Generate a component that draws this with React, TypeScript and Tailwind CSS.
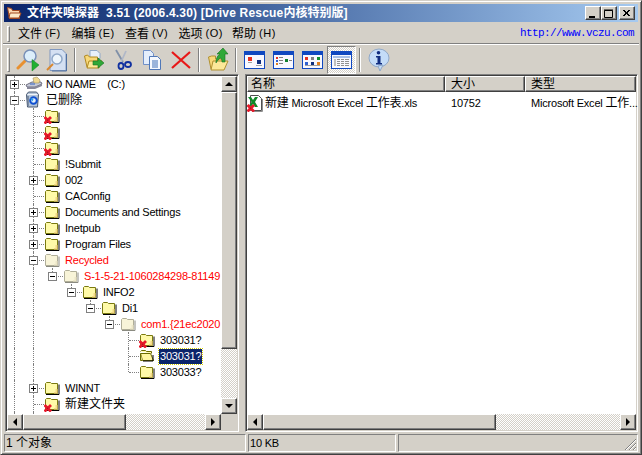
import React from 'react';

const UI_FONT = 'font-["Liberation_Sans","Noto_Sans_CJK_SC",sans-serif]';

// classic win2k bevels
const raised = 'border border-t-white border-l-white border-r-[#404040] border-b-[#404040] shadow-[inset_-1px_-1px_0_#808080]';
const sunkenThin = 'border border-t-[#808080] border-l-[#808080] border-r-white border-b-white';
const sunkenPane = 'border border-t-[#808080] border-l-[#808080] border-r-white border-b-white shadow-[inset_1px_1px_0_#404040,inset_-1px_-1px_0_#d4d0c8] p-[1px]';
const checker = 'bg-[repeating-conic-gradient(#d4d0c8_0_25%,#ffffff_0_50%)] bg-[length:2px_2px]';
// list and tree text: Arial-metric at 11px, pulled in to Tahoma's width
const smallText = 'text-[11px] tracking-[-0.2px]';

function RedCross() {
  return (
    <g>
      <path d="M0.500 9L7 15.500M7 9L0.500 15.500" stroke="#e8182a" strokeWidth="2.800" />
      <path d="M3.500 12.200h0.600" stroke="#401010" strokeWidth="1" />
    </g>
  );
}

function FolderIcon({ variant = 'normal' }: { variant?: 'normal' | 'deleted' | 'ghost' | 'open' }) {
  const ghost = variant === 'ghost';
  const stroke = ghost ? '#b0ae98' : '#7a7a10';
  const fill = ghost ? '#f8f4d8' : '#fffaa8';
  return (
    <svg width="16" height="16" viewBox="0 0 16 16" className="shrink-0 block">
      {variant === 'open' ? (
        <>
          <path d="M1.500 3.500l1-1h4l1 1h5v2" fill="#fff9a8" stroke="#6b6b00" />
          <path d="M1.500 5.500h10l3 7h-11z" fill="#fff5a0" stroke="#6b6b00" />
          <path d="M14 7v6H4" fill="none" stroke="#000" />
          <path d="M1.500 5.500v7h2" fill="#d8d088" stroke="#6b6b00" />
        </>
      ) : (
        <>
          <path d="M1.500 13.500v-10l1-1h4l1 1h6v10z" fill={fill} stroke={stroke} />
          <path d="M10 12h3.500v1.500H10zM11.500 9h2v3h-2z" fill={ghost ? '#ece6c8' : '#f4d888'} />
          <path d="M2 14.500h13V4.500" fill="none" stroke={ghost ? '#8a8a80' : '#000'} />
        </>
      )}
      {variant === 'deleted' && <RedCross />}
    </svg>
  );
}

function DriveIcon() {
  return (
    <svg width="18" height="16" viewBox="0 0 18 16" className="shrink-0 block">
      <path d="M1 9l6-3h9l1 2-7 3H2z" fill="#c4c8d8" stroke="#707080" />
      <path d="M2 11h8l7-3v2l-7 3H2z" fill="#88889a" />
      <path d="M8 2l4-1 3 3-1 3H9z" fill="#f0d890" stroke="#a09060" strokeWidth="0.600" />
      <path d="M5 8h5" stroke="#3060c0" />
    </svg>
  );
}

function BinIcon() {
  return (
    <svg width="16" height="17" viewBox="0 0 16 17" className="shrink-0 block -mt-px">
      <path d="M1.500 3.500l2-2.500h8l2 2.500-1 12.500h-10z" fill="#b4c4d8" stroke="#485870" />
      <path d="M2.500 3.500h10" stroke="#f0f4f8" />
      <path d="M3 5v10" stroke="#687890" strokeWidth="1.500" />
      <circle cx="8.500" cy="9.500" r="3.300" fill="#e4f0fc" stroke="#1050d0" strokeWidth="2" />
      <path d="M5 7l3.500 1-1 2.500" fill="#20a0f0" />
    </svg>
  );
}

function ExcelIcon() {
  return (
    <svg width="16" height="17" viewBox="0 0 16 17" className="shrink-0 block">
      <path d="M3.500 0.500h8l3 3v12h-11z" fill="#fff" stroke="#505050" />
      <path d="M15.500 4v12.500H5" fill="none" stroke="#909090" />
      <path d="M1 2h3l2 3 2-3h3L8 7l3 5H8L6 9l-2 3H1l3.500-5z" fill="#108828" />
      <g transform="translate(0 1)">
        <RedCross />
      </g>
    </svg>
  );
}

type RowProps = {
  depth: number;
  guides?: number[]; // columns with a through line
  toggle?: '+' | '-';
  lastChild?: boolean;
  icon: React.ReactNode;
  label?: string;
  cjk?: boolean;
  red?: boolean;
  selected?: boolean;
};

const vLine = 'absolute left-[9px] w-0 border-l border-dotted border-[#808080]';

function TreeRow({ depth, guides = [], toggle, lastChild, icon, label, cjk, red, selected }: RowProps) {
  const cols = Array.from({ length: depth }, (_, i) => i);
  return (
    <div className="flex h-4 items-center whitespace-nowrap">
      {cols.map((c) => (
        <div key={c} className="relative h-4 w-[19px] shrink-0">
          {guides.includes(c) && <div className={`${vLine} top-0 bottom-0`} />}
        </div>
      ))}
      <div className="relative h-4 w-[19px] shrink-0">
        <div className={`${vLine} top-0 ${lastChild ? 'h-2' : 'bottom-0'}`} />
        <div className="absolute left-[10px] top-2 h-0 w-[10px] border-t border-dotted border-[#808080]" />
        {toggle && (
          <div className="absolute left-[5px] top-[4px] flex h-[9px] w-[9px] items-center justify-center border border-[#808080] bg-white">
            <div className="relative h-[5px] w-[5px]">
              <div className="absolute left-0 top-[2px] h-px w-[5px] bg-black" />
              {toggle === '+' && <div className="absolute left-[2px] top-0 h-[5px] w-px bg-black" />}
            </div>
          </div>
        )}
      </div>
      <div className="ml-[1px] mr-[1px] w-[16px] shrink-0">{icon}</div>
      {label && (
        <span
          className={`ml-[3px] h-[15px] whitespace-pre px-[1px] leading-[15px] ${cjk ? 'text-[12px]' : smallText} ${
            selected
              ? 'bg-[#0a246a] text-white outline-1 outline-dotted outline-[#d4d000]'
              : red
                ? 'text-[#ff0000]'
                : 'text-black'
          }`}
        >
          {label}
        </span>
      )}
    </div>
  );
}

function ScrollArrow({ dir }: { dir: 'up' | 'down' | 'left' | 'right' }) {
  const pts = {
    up: '4,1 0,5 8,5',
    down: '0,1 8,1 4,5',
    left: '5,0 5,8 1,4',
    right: '1,0 1,8 5,4',
  }[dir];
  return (
    <div className={`flex h-4 w-4 shrink-0 items-center justify-center bg-[#d4d0c8] ${raised}`}>
      <svg width={dir === 'up' || dir === 'down' ? 8 : 6} height={dir === 'up' || dir === 'down' ? 6 : 8} className="block">
        <polygon points={pts} fill="#000" />
      </svg>
    </div>
  );
}

function VScrollbar() {
  return (
    <div className="flex w-4 shrink-0 flex-col">
      <ScrollArrow dir="up" />
      <div className={`h-[257px] shrink-0 bg-[#d4d0c8] ${raised}`} />
      <div className={`flex-1 ${checker}`} />
      <ScrollArrow dir="down" />
    </div>
  );
}

function HScrollbar({ thumb, className }: { thumb: string; className?: string }) {
  return (
    <div className={`flex h-4 shrink-0 ${className ?? ''}`}>
      <ScrollArrow dir="left" />
      <div className={`${thumb} shrink-0 bg-[#d4d0c8] ${raised}`} />
      <div className={`flex-1 ${checker}`} />
      <ScrollArrow dir="right" />
    </div>
  );
}

function Sep() {
  return <div className="mx-[3px] h-[24px] w-[2px] shrink-0 border-l border-r border-l-[#808080] border-r-white" />;
}

function Gripper({ tall }: { tall?: boolean }) {
  return (
    <div
      className={`${tall ? 'h-[24px]' : 'h-[16px]'} w-[3px] shrink-0 border border-t-white border-l-white border-r-[#808080] border-b-[#808080]`}
    />
  );
}

function ToolSlot({ active, children }: { active?: boolean; children: React.ReactNode }) {
  return (
    <div
      className={`flex h-[28px] w-[29px] shrink-0 items-center justify-center ${
        active ? `border border-t-[#808080] border-l-[#808080] border-r-white border-b-white ${checker}` : ''
      }`}
    >
      {children}
    </div>
  );
}

function MagnifierIcon() {
  return (
    <svg width="24" height="24" viewBox="0 0 24 24">
      <path d="M2 20l7-7" stroke="#e89030" strokeWidth="3" strokeLinecap="round" />
      <circle cx="14" cy="8" r="6" fill="#dceefa" stroke="#7890b8" strokeWidth="1.500" />
      <path d="M16 11.500l7 5.500-7 6z" fill="#20b030" stroke="#108020" strokeWidth="0.500" />
    </svg>
  );
}

function DocSearchIcon() {
  return (
    <svg width="22" height="24" viewBox="0 0 22 24">
      <path d="M4 1.500h12l4 4v17H4z" fill="#d4e0f2" stroke="#8098c0" />
      <path d="M20.500 6v17H6" fill="none" stroke="#5070a0" />
      <path d="M1 22l6-6" stroke="#d88830" strokeWidth="2" />
      <circle cx="11" cy="11" r="5" fill="#eef6fc" stroke="#90a8c8" strokeWidth="1.500" />
    </svg>
  );
}

function OpenFolderArrowIcon() {
  return (
    <svg width="22" height="22" viewBox="0 0 22 22">
      <path d="M7 1.500h7l3 3v5H7z" fill="#e8f0fc" stroke="#90a8c8" />
      <path d="M1.500 7l3-1 2 2h8v10H4z" fill="#f8d878" stroke="#b08820" />
      <path d="M4 19l2-7h13l-3 7z" fill="#fce898" stroke="#b08820" />
      <path d="M10 12h5V9l6 5-6 5v-3h-5z" fill="#30a838" stroke="#187020" strokeWidth="0.600" />
    </svg>
  );
}

function ScissorsIcon() {
  return (
    <svg width="20" height="22" viewBox="0 0 20 22">
      <path d="M3 1l7 12" stroke="#8090a8" strokeWidth="1.800" />
      <path d="M13 2L8 13" stroke="#b0b8c8" strokeWidth="1.800" />
      <ellipse cx="8" cy="17" rx="2.500" ry="3" fill="none" stroke="#1030a0" strokeWidth="1.800" />
      <ellipse cx="15" cy="15.500" rx="3" ry="2.500" fill="none" stroke="#1030a0" strokeWidth="1.800" />
    </svg>
  );
}

function CopyIcon() {
  return (
    <svg width="22" height="22" viewBox="0 0 22 22">
      <path d="M2.500 1.500h7l3 3v11h-10z" fill="#e4eefc" stroke="#7090c8" />
      <path d="M8.500 7.500h8l3 3v10h-11z" fill="#f4f8fe" stroke="#5078b8" />
      <path d="M11 12h6M11 14h6M11 16h6M11 18h6" stroke="#4070b8" />
    </svg>
  );
}

function DeleteIcon() {
  return (
    <svg width="22" height="22" viewBox="0 0 22 22">
      <path d="M2 3l18 16M20 3L2 19" stroke="#e81818" strokeWidth="2.200" />
    </svg>
  );
}

function UpFolderIcon() {
  return (
    <svg width="22" height="24" viewBox="0 0 22 24">
      <path d="M1.500 9l3-1h4v3h7v10H4z" fill="#f8d878" stroke="#b09030" />
      <path d="M4 22l2-9h15l-4 9z" fill="#fce898" stroke="#b09030" />
      <path d="M9 15c0-5 2-8 4-9H10l6-6 5 6h-3v8h-3c0-3-1-4-2-4-1 1-3 3-4 5z" fill="#30a838" stroke="#187020" strokeWidth="0.600" />
    </svg>
  );
}

function ViewIcon({ kind }: { kind: 'large' | 'small' | 'list' | 'detail' }) {
  return (
    <svg width="21" height="18" viewBox="0 0 21 18">
      <rect x="0.500" y="0.500" width="20" height="17" fill="#f8f8ff" stroke="#1048c0" />
      <rect x="1" y="1" width="19" height="3" fill="#1048c0" />
      {kind === 'large' && (
        <>
          <rect x="4" y="6" width="4" height="4" fill="#e83020" />
          <rect x="4" y="11" width="4" height="1" fill="#a0a0a0" />
          <rect x="13" y="9" width="4" height="4" fill="#103080" />
          <rect x="12" y="14" width="6" height="1" fill="#a0a0a0" />
        </>
      )}
      {kind === 'small' && (
        <>
          <rect x="3" y="6" width="2" height="2" fill="#e83020" />
          <rect x="6" y="6" width="4" height="1" fill="#808080" />
          <rect x="3" y="9" width="2" height="2" fill="#3060d0" />
          <rect x="6" y="9" width="4" height="1" fill="#808080" />
          <rect x="3" y="12" width="2" height="2" fill="#e08020" />
          <rect x="6" y="12" width="4" height="1" fill="#808080" />
          <rect x="12" y="8" width="3" height="3" fill="#108030" />
          <rect x="16" y="9" width="3" height="1" fill="#808080" />
        </>
      )}
      {kind === 'list' && (
        <>
          {['#e83020', '#808080', '#109030', '#3060d0', '#103080', '#e08020'].map((c, i) => (
            <rect key={i} x={3 + (i % 3) * 6} y={6 + Math.floor(i / 3) * 5} width="3" height="3" fill={c} />
          ))}
          <rect x="3" y="14" width="15" height="1" fill="#a0a0a0" />
        </>
      )}
      {kind === 'detail' && (
        <>
          <rect x="2" y="5" width="17" height="2" fill="#a8c0e8" />
          {[8, 10, 12, 14].map((y) => (
            <rect key={y} x="6" y={y} width="12" height="1" fill="#909090" />
          ))}
          {[9, 13].map((x) => (
            <rect key={x} x={x} y="8" width="1" height="7" fill="#f8f8ff" />
          ))}
          <rect x="3" y="8" width="2" height="7" fill="#c0c0c0" />
        </>
      )}
    </svg>
  );
}

function InfoIcon() {
  return (
    <svg width="22" height="24" viewBox="0 0 22 24">
      <ellipse cx="11" cy="10" rx="10" ry="9" fill="#c4dcf8" stroke="#90a8c8" />
      <path d="M10 18l2 5 3-6z" fill="#c4dcf8" stroke="#90a8c8" />
      <circle cx="10.500" cy="4.800" r="1.800" fill="#102c80" />
      <path d="M8 8h4.500v7H14v1.500H8V15h1.500V9.500H8z" fill="#102c80" />
    </svg>
  );
}

function Caption({ symbol }: { symbol: 'min' | 'max' | 'close' }) {
  return (
    <div className={`flex h-[14px] w-[16px] items-center justify-center bg-[#d4d0c8] ${raised}`}>
      <svg width="10" height="9" viewBox="0 0 10 9" className="block">
        {symbol === 'min' && <rect x="1" y="7" width="6" height="2" fill="#000" />}
        {symbol === 'max' && <path d="M0.500 1.500h8v7h-8zM0 1h9" fill="none" stroke="#000" />}
        {symbol === 'close' && <path d="M1 1l6 6M2 1l6 6M7 1L1 7M8 1L2 7" stroke="#000" />}
      </svg>
    </div>
  );
}

function MenuItem({ label, hotkey }: { label: string; hotkey: string }) {
  return (
    <div className="flex h-full w-[53.5px] shrink-0 items-center whitespace-nowrap">
      <span className="text-[12px] leading-none">{label}</span>
      <span className="ml-[3px] text-[11px] leading-none tracking-[0.5px]">({hotkey})</span>
    </div>
  );
}

const header = `flex h-4 shrink-0 items-center bg-[#d4d0c8] text-[12px] leading-none ${raised}`;

export default function App() {
  return (
    <div
      className={`flex h-[455px] w-[642px] flex-col overflow-hidden bg-[#d4d0c8] p-[2px] text-black ${UI_FONT} border border-t-[#d4d0c8] border-l-[#d4d0c8] border-r-[#404040] border-b-[#404040] shadow-[inset_1px_1px_0_#ffffff,inset_-1px_-1px_0_#808080]`}
    >
      {/* Title bar */}
      <div className="mx-px mt-px flex h-[18px] shrink-0 items-center justify-between bg-gradient-to-r from-[#0a246a] to-[#a6caf0] pl-[2px] pr-[3px]">
        <div className="flex min-w-0 items-center">
          <svg width="16" height="16" viewBox="0 0 16 16" className="block shrink-0">
            <path d="M1.500 2.500l4 1 1 2h7v8h-10z" fill="#fcd8b0" stroke="#a04820" />
            <path d="M3 13l1-5h11l-2 5z" fill="#fce8c8" stroke="#a04820" />
          </svg>
          <span className="ml-[5px] whitespace-nowrap text-[12px] font-bold leading-none text-white">
            文件夹嗅探器<span className="ml-[7px] tracking-[0.2px]">3.51 (2006.4.30) [Drive Rescue</span>内核特别版]
          </span>
        </div>
        <div className="flex shrink-0 items-center">
          <Caption symbol="min" />
          <Caption symbol="max" />
          <div className="ml-[2px]">
            <Caption symbol="close" />
          </div>
        </div>
      </div>

      {/* Menu bar */}
      <div className="mt-[2px] flex h-[19px] shrink-0 items-center pl-[4px]">
        <Gripper />
        <div className="ml-[8px] flex h-full">
          <MenuItem label="文件" hotkey="F" />
          <MenuItem label="编辑" hotkey="E" />
          <MenuItem label="查看" hotkey="V" />
          <MenuItem label="选项" hotkey="O" />
          <MenuItem label="帮助" hotkey="H" />
        </div>
        <span className='ml-auto mr-[5px] whitespace-nowrap font-["Liberation_Mono",monospace] text-[11px] leading-none tracking-[-0.6px] text-[#0000ff]'>
          http://www.vczu.com
        </span>
      </div>
      <div className="h-[2px] shrink-0 border-t border-b border-t-[#808080] border-b-white" />

      {/* Toolbar */}
      <div className="flex h-[29px] shrink-0 items-center pl-[4px]">
        <Gripper tall />
        <div className="ml-[3px] flex items-center">
          <ToolSlot><MagnifierIcon /></ToolSlot>
          <ToolSlot><DocSearchIcon /></ToolSlot>
          <Sep />
          <ToolSlot><OpenFolderArrowIcon /></ToolSlot>
          <ToolSlot><ScissorsIcon /></ToolSlot>
          <ToolSlot><CopyIcon /></ToolSlot>
          <ToolSlot><DeleteIcon /></ToolSlot>
          <Sep />
          <ToolSlot><UpFolderIcon /></ToolSlot>
          <Sep />
          <ToolSlot><ViewIcon kind="large" /></ToolSlot>
          <ToolSlot><ViewIcon kind="small" /></ToolSlot>
          <ToolSlot><ViewIcon kind="list" /></ToolSlot>
          <ToolSlot active><ViewIcon kind="detail" /></ToolSlot>
          <Sep />
          <ToolSlot><InfoIcon /></ToolSlot>
        </div>
      </div>

      {/* Panes */}
      <div className="flex min-h-0 flex-1 pl-[2px] pr-[1px]">
        <div className={`flex w-[234px] shrink-0 flex-col ${sunkenPane}`}>
          <div className="flex min-h-0 flex-1">
            <div className="min-w-0 flex-1 overflow-hidden bg-white">
              <div className="-ml-[2px]">
                <TreeRow depth={0} toggle="+" icon={<DriveIcon />} label="NO NAME    (C:)" />
                <TreeRow depth={0} toggle="-" icon={<BinIcon />} label="已删除" cjk />
                <TreeRow depth={1} guides={[0]} icon={<FolderIcon variant="deleted" />} />
                <TreeRow depth={1} guides={[0]} icon={<FolderIcon variant="deleted" />} />
                <TreeRow depth={1} guides={[0]} icon={<FolderIcon variant="deleted" />} />
                <TreeRow depth={1} guides={[0]} icon={<FolderIcon />} label="!Submit" />
                <TreeRow depth={1} guides={[0]} toggle="+" icon={<FolderIcon />} label="002" />
                <TreeRow depth={1} guides={[0]} icon={<FolderIcon />} label="CAConfig" />
                <TreeRow depth={1} guides={[0]} toggle="+" icon={<FolderIcon />} label="Documents and Settings" />
                <TreeRow depth={1} guides={[0]} toggle="+" icon={<FolderIcon />} label="Inetpub" />
                <TreeRow depth={1} guides={[0]} toggle="+" icon={<FolderIcon />} label="Program Files" />
                <TreeRow depth={1} guides={[0]} toggle="-" icon={<FolderIcon variant="ghost" />} label="Recycled" red />
                <TreeRow depth={2} guides={[0, 1]} toggle="-" lastChild icon={<FolderIcon variant="ghost" />} label="S-1-5-21-1060284298-81149" red />
                <TreeRow depth={3} guides={[0, 1]} toggle="-" lastChild icon={<FolderIcon />} label="INFO2" />
                <TreeRow depth={4} guides={[0, 1]} toggle="-" lastChild icon={<FolderIcon />} label="Di1" />
                <TreeRow depth={5} guides={[0, 1]} toggle="-" lastChild icon={<FolderIcon variant="ghost" />} label="com1.{21ec2020" red />
                <TreeRow depth={6} guides={[0, 1]} icon={<FolderIcon variant="deleted" />} label="303031?" />
                <TreeRow depth={6} guides={[0, 1]} icon={<FolderIcon variant="open" />} label="303031?" selected />
                <TreeRow depth={6} guides={[0, 1]} lastChild icon={<FolderIcon />} label="303033?" />
                <TreeRow depth={1} guides={[0]} toggle="+" icon={<FolderIcon />} label="WINNT" />
                <TreeRow depth={1} guides={[0]} icon={<FolderIcon variant="deleted" />} label="新建文件夹" cjk />
                <TreeRow depth={1} guides={[0]} icon={<FolderIcon />} />
              </div>
            </div>
            <VScrollbar />
          </div>
          <div className="flex">
            <HScrollbar thumb="w-[103px]" className="flex-1" />
            <div className="w-4 shrink-0" />
          </div>
        </div>

        <div className="w-[6px] shrink-0" />

        <div className={`flex min-w-0 flex-1 flex-col ${sunkenPane}`}>
          <div className="flex shrink-0">
            <div className={`${header} w-[198px] pl-[3px]`}>名称</div>
            <div className={`${header} w-[80px] pl-[5px]`}>大小</div>
            <div className={`${header} flex-1 pl-[5px]`}>类型</div>
          </div>
          <div className="min-h-0 flex-1 bg-white pt-[3px]">
            <div className={`flex h-4 items-center whitespace-nowrap leading-none ${smallText}`}>
              <div className="flex w-[198px] shrink-0 items-center">
                <ExcelIcon />
                <span className="ml-[2px]">
                  <span className="text-[12px]">新建</span> Microsoft Excel <span className="text-[12px]">工作表</span>.xls
                </span>
              </div>
              <div className="w-[80px] shrink-0 pl-[6px]">10752</div>
              <div className="pl-[6px]">
                Microsoft Excel <span className="text-[12px]">工作</span>...
              </div>
            </div>
          </div>
          <HScrollbar thumb="w-[233px]" />
        </div>
      </div>

      {/* Status bar */}
      <div className="mt-[2px] flex h-[18px] shrink-0 gap-[2px] pl-px pr-[1px] text-[12px] leading-none">
        <div className={`flex w-[242px] shrink-0 items-center pl-[1px] ${sunkenThin}`}>1 个对象</div>
        <div className={`flex w-[148px] shrink-0 items-center pl-[1px] ${smallText} ${sunkenThin}`}>10 KB</div>
        <div className={`relative flex-1 ${sunkenThin}`}>
          <svg width="13" height="13" viewBox="0 0 13 13" className="absolute bottom-0 right-0 block">
            <path d="M12 1L1 12M12 5L5 12M12 9L9 12" stroke="#808080" />
            <path d="M12 2L2 12M12 6L6 12M12 10L10 12" stroke="#ffffff" />
          </svg>
        </div>
      </div>
    </div>
  );
}
